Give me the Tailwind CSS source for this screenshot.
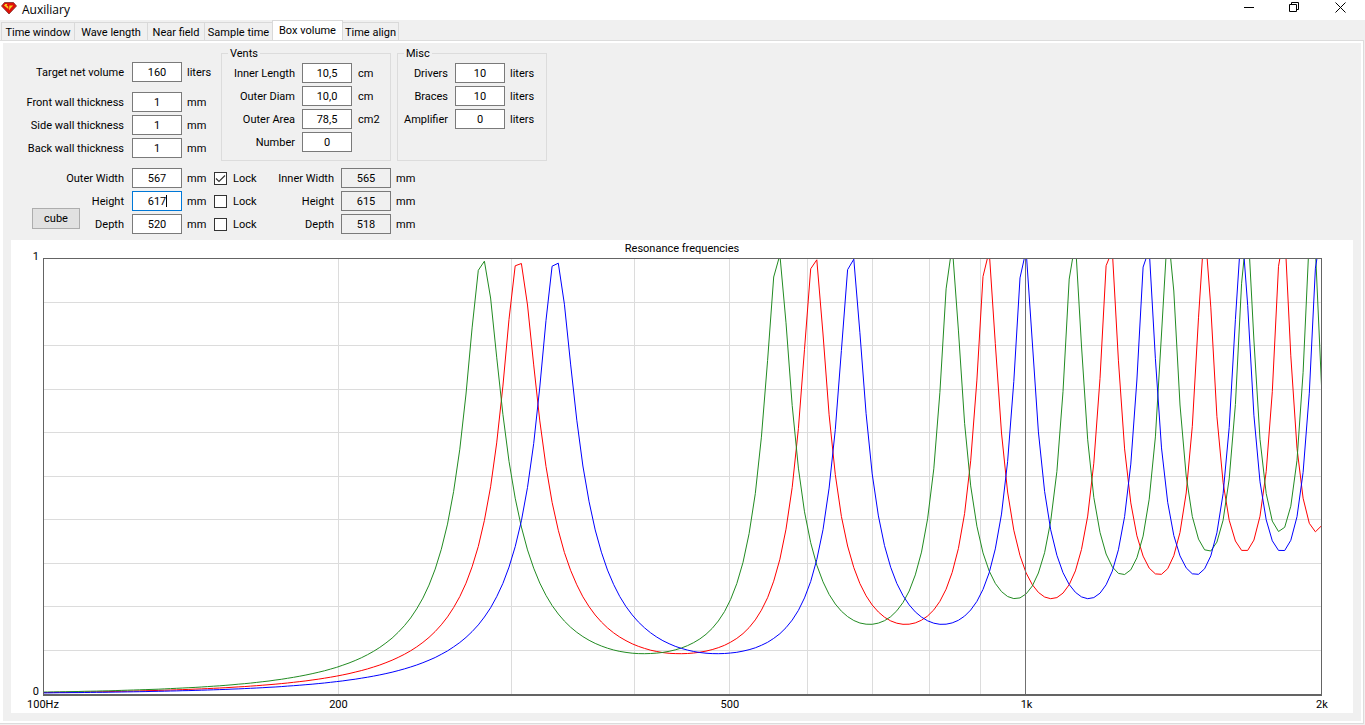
<!doctype html>
<html lang="en">
    <head>
        <meta charset="UTF-8" />
        <meta name="viewport" content="width=device-width, initial-scale=1.0" />
        <title>Auxiliary</title>
        <script src="https://cdn.jsdelivr.net/npm/@tailwindcss/browser@4"></script>
    </head>
    <body
        class="min-h-screen flex flex-col bg-[#f0f0f0] text-black font-['Roboto',sans-serif] text-[11px] leading-[15px]"
    >
        <header class="flex h-5 items-center bg-white pl-px">
            <svg class="h-[14px] w-4 mb-1" viewBox="0 0 16 14">
                <path d="M3.5 1.5h9l3 3.5L8 13 .5 5z" fill="#e01008" stroke="#7a3028" stroke-width="0.8" />
                <path d="M3 4.4l1.4-1.4h2L5.6 4.4l1.6 1.2L7.4 8z" fill="#f8d020" />
                <path d="M8.4 4.4h3.8L9.4 7.4 8 9.6z" fill="#f8d020" />
            </svg>
            <h1 class="ml-[5px] flex-1 pb-px font-['Open_Sans',sans-serif] text-[12px] leading-4">Auxiliary</h1>
            <div class="flex items-start gap-[35px] pr-[19px] pb-[5px]">
                <button aria-label="Minimize" class="h-[11px] w-[10px]">
                    <svg viewBox="0 0 10 11" class="h-[11px] w-[10px]"><path d="M0 5.5h10" stroke="#000" /></svg>
                </button>
                <button aria-label="Restore" class="h-[11px] w-[11px]">
                    <svg viewBox="0 0 11 11" class="h-[11px] w-[11px]" fill="none" stroke="#000">
                        <path d="M.5 2.5h7v7h-7zM2.5 2.5v-2h7v7h-2" />
                    </svg>
                </button>
                <button aria-label="Close" class="h-[11px] w-[11px]">
                    <svg viewBox="0 0 11 11" class="h-[11px] w-[11px]"><path d="M.5.5l10 10M10.5.5l-10 10" stroke="#000" /></svg>
                </button>
            </div>
        </header>
        <nav class="flex h-[21px] items-end pl-px">
            <button class="h-[19px] w-[74px] border border-b-0 border-[#d9d9d9]">Time window</button>
            <button class="h-[19px] w-[73px] border border-b-0 border-l-0 border-[#d9d9d9]">Wave length</button>
            <button class="h-[19px] w-[57px] border border-b-0 border-l-0 border-[#d9d9d9]">Near field</button>
            <button class="h-[19px] w-[67px] border-t border-[#d9d9d9]">Sample time</button>
            <button class="h-[21px] w-[71px] border border-b-0 border-[#d9d9d9] bg-white pb-[2px]">Box volume</button>
            <button class="h-[19px] w-[56px] border border-b-0 border-l-0 border-[#d9d9d9]">Time align</button>
        </nav>
        <main
            class="mr-[2px] mb-[2px] flex flex-1 flex-col border-2 border-l-[3px] border-white outline outline-[#dcdcdc] pb-2"
        >
            <div class="flex h-[125px]">
                <div class="flex w-[218px] flex-col gap-[3px] pt-[19px]">
                    <div class="mb-[7px] flex h-5 items-center">
                        <label for="net" class="w-[121px] text-right">Target net volume</label>
                        <input id="net" value="160" class="mr-[5px] ml-2 h-5 w-[50px] border border-[#7a7a7a] bg-white text-center" />
                        <span>liters</span>
                    </div>
                    <div class="flex h-5 items-center">
                        <label for="front" class="w-[121px] text-right">Front wall thickness</label>
                        <input id="front" value="1" class="mr-[5px] ml-2 h-5 w-[50px] border border-[#7a7a7a] bg-white text-center" />
                        <span>mm</span>
                    </div>
                    <div class="flex h-5 items-center">
                        <label for="side" class="w-[121px] text-right">Side wall thickness</label>
                        <input id="side" value="1" class="mr-[5px] ml-2 h-5 w-[50px] border border-[#7a7a7a] bg-white text-center" />
                        <span>mm</span>
                    </div>
                    <div class="flex h-5 items-center">
                        <label for="back" class="w-[121px] text-right">Back wall thickness</label>
                        <input id="back" value="1" class="mr-[5px] ml-2 h-5 w-[50px] border border-[#7a7a7a] bg-white text-center" />
                        <span>mm</span>
                    </div>
                </div>
                <fieldset class="mt-[3px] mb-[7px] w-[170px] border border-[#dcdcdc]">
                    <legend class="ml-[6px] px-[2px]">Vents</legend>
                    <div class="flex flex-col gap-[3px] pt-[2px]">
                        <div class="flex h-5 items-center">
                            <label for="len" class="w-[73px] text-right">Inner Length</label>
                            <input id="len" value="10,5" class="mr-[6px] ml-[7px] h-5 w-[50px] border border-[#7a7a7a] bg-white text-center" />
                            <span>cm</span>
                        </div>
                        <div class="flex h-5 items-center">
                            <label for="diam" class="w-[73px] text-right">Outer Diam</label>
                            <input id="diam" value="10,0" class="mr-[6px] ml-[7px] h-5 w-[50px] border border-[#7a7a7a] bg-white text-center" />
                            <span>cm</span>
                        </div>
                        <div class="flex h-5 items-center">
                            <label for="area" class="w-[73px] text-right">Outer Area</label>
                            <input id="area" value="78,5" class="mr-[6px] ml-[7px] h-5 w-[50px] border border-[#7a7a7a] bg-white text-center" />
                            <span>cm2</span>
                        </div>
                        <div class="flex h-5 items-center">
                            <label for="num" class="w-[73px] text-right">Number</label>
                            <input id="num" value="0" class="ml-[7px] h-5 w-[50px] border border-[#7a7a7a] bg-white text-center" />
                        </div>
                    </div>
                </fieldset>
                <fieldset class="mt-[3px] mb-[7px] ml-[6px] w-[150px] border border-[#dcdcdc]">
                    <legend class="ml-[6px] px-[2px]">Misc</legend>
                    <div class="flex flex-col gap-[3px] pt-[2px]">
                        <div class="flex h-5 items-center">
                            <label for="drivers" class="w-[50px] text-right">Drivers</label>
                            <input id="drivers" value="10" class="mr-[5px] ml-[7px] h-5 w-[50px] border border-[#7a7a7a] bg-white text-center" />
                            <span>liters</span>
                        </div>
                        <div class="flex h-5 items-center">
                            <label for="braces" class="w-[50px] text-right">Braces</label>
                            <input id="braces" value="10" class="mr-[5px] ml-[7px] h-5 w-[50px] border border-[#7a7a7a] bg-white text-center" />
                            <span>liters</span>
                        </div>
                        <div class="flex h-5 items-center">
                            <label for="amp" class="w-[50px] text-right">Amplifier</label>
                            <input id="amp" value="0" class="mr-[5px] ml-[7px] h-5 w-[50px] border border-[#7a7a7a] bg-white text-center" />
                            <span>liters</span>
                        </div>
                    </div>
                </fieldset>
            </div>
            <div class="flex pl-[29px]">
                <button class="mt-10 h-[21px] w-12 border border-[#adadad] bg-[#e1e1e1]">cube</button>
                <div class="flex flex-col gap-[3px]">
                    <div class="flex h-5 items-center">
                        <label for="ow" class="flex w-[44px] justify-end whitespace-nowrap">Outer Width</label>
                        <input id="ow" value="567" class="mr-[5px] ml-2 h-5 w-[50px] border border-[#7a7a7a] bg-white text-center" />
                        <span class="w-[27px]">mm</span>
                        <input id="lw" type="checkbox" checked class="h-[13px] w-[13px] appearance-none border border-[#333] bg-white" />
                        <svg class="pointer-events-none -ml-[13px] h-[13px] w-[13px]" viewBox="0 0 13 13">
                            <path d="M2 6.5l3 3 6-6" fill="none" stroke="#333" stroke-width="1.2" />
                        </svg>
                        <label for="lw" class="ml-[6px] w-[30px]">Lock</label>
                        <label for="iw" class="w-[71px] text-right">Inner Width</label>
                        <input id="iw" value="565" readonly class="mr-[5px] ml-[7px] h-5 w-[50px] border border-[#7a7a7a] bg-[#f0f0f0] text-center" />
                        <span>mm</span>
                    </div>
                    <div class="flex h-5 items-center">
                        <label for="oh" class="w-[44px] text-right">Height</label>
                        <div class="relative mr-[5px] ml-2 h-5 w-[50px]">
                            <input id="oh" value="617" class="h-5 w-[50px] border border-[#0078d7] bg-white text-center" />
                            <span class="absolute top-1 left-[34px] h-3 w-px bg-black"></span>
                        </div>
                        <span class="w-[27px]">mm</span>
                        <input id="lh" type="checkbox" class="h-[13px] w-[13px] appearance-none border border-[#333] bg-white" />
                        <label for="lh" class="ml-[6px] w-[30px]">Lock</label>
                        <label for="ih" class="w-[71px] text-right">Height</label>
                        <input id="ih" value="615" readonly class="mr-[5px] ml-[7px] h-5 w-[50px] border border-[#7a7a7a] bg-[#f0f0f0] text-center" />
                        <span>mm</span>
                    </div>
                    <div class="flex h-5 items-center">
                        <label for="od" class="w-[44px] text-right">Depth</label>
                        <input id="od" value="520" class="mr-[5px] ml-2 h-5 w-[50px] border border-[#7a7a7a] bg-white text-center" />
                        <span class="w-[27px]">mm</span>
                        <input id="ld" type="checkbox" class="h-[13px] w-[13px] appearance-none border border-[#333] bg-white" />
                        <label for="ld" class="ml-[6px] w-[30px]">Lock</label>
                        <label for="id" class="w-[71px] text-right">Depth</label>
                        <input id="id" value="518" readonly class="mr-[5px] ml-[7px] h-5 w-[50px] border border-[#7a7a7a] bg-[#f0f0f0] text-center" />
                        <span>mm</span>
                    </div>
                </div>
            </div>
            <section class="mt-[6px] mr-2 ml-2 flex flex-1 flex-col bg-white">
                <h2 class="h-[18px] text-center leading-[17px]">Resonance frequencies</h2>
                <div class="flex flex-1">
                    <div class="-mt-2 -mb-[2px] flex w-8 flex-col justify-between pr-1 text-right leading-[13px]">
                        <span>1</span>
                        <span>0</span>
                    </div>
                    <div class="flex min-h-[300px] flex-1 border border-b-2 border-[#646464]">
                        <svg id="plot" class="h-full min-h-0 w-full" viewBox="0 0 1277 435" preserveAspectRatio="none"></svg>
                    </div>
                    <div class="w-[31px]"></div>
                </div>
                <svg class="mr-[31px] ml-8 h-[17px] overflow-visible" fill="#000" text-anchor="middle">
                    <text x="0%" y="12">100Hz</text>
                    <text x="23.1%" y="12">200</text>
                    <text x="53.7%" y="12">500</text>
                    <text x="76.9%" y="12">1k</text>
                    <text x="100%" y="12">2k</text>
                </svg>
            </section>
        </main>
        <script>
            const W = 1277;
            const H = 435;
            const plot = document.getElementById("plot");
            const xOf = (f) => (W * Math.log(f / 100)) / Math.log(20);

            // level and position of the dip after each mode
            const dip = [0, 0.0926, 0.16, 0.219, 0.274, 0.327, 0.372, 0.4];
            const dipAt = [0, 0.458, 0.477, 0.49, 0.49, 0.49, 0.49, 0.49];
            const right = [0, 0.43, 0.69, 0.85, 0.9, 0.9, 0.9, 0.9];
            const left = [0, 0.3, 0.54, 0.61, 0.68, 0.72, 0.75, 0.75];

            function level(u) {
                if (u < 1) {
                    const d = u - 1 / u;
                    return (u * u * (1.18 - 0.18 * u ** 20)) / Math.sqrt(1 + 190 * d * d);
                }
                const n = Math.floor(u);
                const r = u - n;
                const falling = r < dipAt[n];
                const t = falling ? r / dipAt[n] : (1 - r) / (1 - dipAt[n]);
                const a = falling ? right[n] : left[n];
                const s = Math.sin((t * Math.PI) / 2) ** 2;
                const k = 1 / dip[n] ** 2 - 1;
                const y = 1 / Math.sqrt(1 + k * s * (a + (1 - a) * s));
                const peak = falling ? n : n + 1;
                return y * (1 + 0.02 * (peak - 1) * y ** 4);
            }

            // 48 points per octave, starting at 20 Hz
            function curve(size, color) {
                const f0 = 344200 / (2 * size);
                const pts = [];
                for (let k = 111; k <= 320; k++) {
                    const f = 20 * 2 ** (k / 48);
                    pts.push(xOf(f).toFixed(1) + "," + (H * (1 - level(f / f0))).toFixed(1));
                }
                return `<polyline points="${pts.join(" ")}" fill="none" stroke="${color}" vector-effect="non-scaling-stroke" />`;
            }

            let html = "";
            for (let i = 1; i < 10; i++) {
                const y = Math.round((H * i) / 10) - 0.5;
                html += `<path d="M0 ${y}H${W}" stroke="#dcdcdc" vector-effect="non-scaling-stroke" />`;
            }
            for (let f = 200; f < 1000; f += 100) {
                const x = Math.round(xOf(f)) - 0.5;
                html += `<path d="M${x} 0V${H}" stroke="#dcdcdc" vector-effect="non-scaling-stroke" />`;
            }
            html += curve(565, "#ff0000") + curve(615, "#228b22") + curve(518, "#0000ff");
            html += `<path d="M${Math.floor(xOf(1000)) + 0.5} 0V${H}" stroke="#707070" vector-effect="non-scaling-stroke" />`;
            plot.innerHTML = html;
        </script>
    </body>
</html>
